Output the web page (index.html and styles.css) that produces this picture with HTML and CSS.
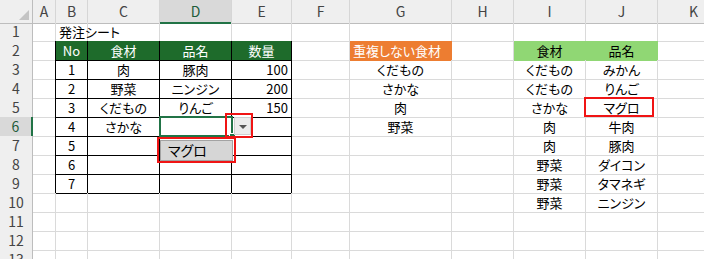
FILE: index.html
```
<!DOCTYPE html>
<html lang="ja">
<head>
<meta charset="utf-8">
<title>発注シート</title>
<link rel="stylesheet" href="styles.css">
</head>
<body>
<section class="sheet">

  <div class="row hdr">
    <div class="corner"><span class="all"></span></div>
    <div class="ch">A</div>
    <div class="ch">B</div>
    <div class="ch">C</div>
    <div class="ch on">D</div>
    <div class="ch">E</div>
    <div class="ch">F</div>
    <div class="ch">G</div>
    <div class="ch">H</div>
    <div class="ch">I</div>
    <div class="ch">J</div>
    <div class="ch">K</div>
  </div>

  <div class="row">
    <div class="rh">1</div>
    <div class="c"></div>
    <div class="c tb left">発注シート</div>
    <div class="c tb"></div>
    <div class="c tb"></div>
    <div class="c tb"></div>
    <div class="c"></div>
    <div class="c"></div>
    <div class="c"></div>
    <div class="c"></div>
    <div class="c"></div>
    <div class="c"></div>
  </div>

  <div class="row">
    <div class="rh">2</div>
    <div class="c tl"></div>
    <div class="c t th">No</div>
    <div class="c t th">食材</div>
    <div class="c t th">品名</div>
    <div class="c t th">数量</div>
    <div class="c"></div>
    <div class="c orange left">重複しない食材</div>
    <div class="c"></div>
    <div class="c lime">食材</div>
    <div class="c lime">品名</div>
    <div class="c"></div>
  </div>

  <div class="row">
    <div class="rh">3</div>
    <div class="c tl"></div>
    <div class="c t">1</div>
    <div class="c t">肉</div>
    <div class="c t">豚肉</div>
    <div class="c t num">100</div>
    <div class="c"></div>
    <div class="c">くだもの</div>
    <div class="c"></div>
    <div class="c">くだもの</div>
    <div class="c">みかん</div>
    <div class="c"></div>
  </div>

  <div class="row">
    <div class="rh">4</div>
    <div class="c tl"></div>
    <div class="c t">2</div>
    <div class="c t">野菜</div>
    <div class="c t">ニンジン</div>
    <div class="c t num">200</div>
    <div class="c"></div>
    <div class="c">さかな</div>
    <div class="c"></div>
    <div class="c">くだもの</div>
    <div class="c">りんご</div>
    <div class="c"></div>
  </div>

  <div class="row">
    <div class="rh">5</div>
    <div class="c tl"></div>
    <div class="c t">3</div>
    <div class="c t">くだもの</div>
    <div class="c t">りんご</div>
    <div class="c t num">150</div>
    <div class="c"></div>
    <div class="c">肉</div>
    <div class="c"></div>
    <div class="c">さかな</div>
    <div class="c">マグロ</div>
    <div class="c"></div>
  </div>

  <div class="row">
    <div class="rh on">6</div>
    <div class="c tl"></div>
    <div class="c t">4</div>
    <div class="c t">さかな</div>
    <div class="c t"></div>
    <div class="c t"></div>
    <div class="c"></div>
    <div class="c">野菜</div>
    <div class="c"></div>
    <div class="c">肉</div>
    <div class="c">牛肉</div>
    <div class="c"></div>
  </div>

  <div class="row">
    <div class="rh">7</div>
    <div class="c tl"></div>
    <div class="c t">5</div>
    <div class="c t"></div>
    <div class="c t"></div>
    <div class="c t"></div>
    <div class="c"></div>
    <div class="c"></div>
    <div class="c"></div>
    <div class="c">肉</div>
    <div class="c">豚肉</div>
    <div class="c"></div>
  </div>

  <div class="row">
    <div class="rh">8</div>
    <div class="c tl"></div>
    <div class="c t">6</div>
    <div class="c t"></div>
    <div class="c t"></div>
    <div class="c t"></div>
    <div class="c"></div>
    <div class="c"></div>
    <div class="c"></div>
    <div class="c">野菜</div>
    <div class="c">ダイコン</div>
    <div class="c"></div>
  </div>

  <div class="row">
    <div class="rh">9</div>
    <div class="c tl"></div>
    <div class="c t">7</div>
    <div class="c t"></div>
    <div class="c t"></div>
    <div class="c t"></div>
    <div class="c"></div>
    <div class="c"></div>
    <div class="c"></div>
    <div class="c">野菜</div>
    <div class="c">タマネギ</div>
    <div class="c"></div>
  </div>

  <div class="row">
    <div class="rh">10</div>
    <div class="c"></div>
    <div class="c"></div>
    <div class="c"></div>
    <div class="c"></div>
    <div class="c"></div>
    <div class="c"></div>
    <div class="c"></div>
    <div class="c"></div>
    <div class="c">野菜</div>
    <div class="c">ニンジン</div>
    <div class="c"></div>
  </div>

  <div class="row">
    <div class="rh">11</div>
    <div class="c"></div><div class="c"></div><div class="c"></div><div class="c"></div>
    <div class="c"></div><div class="c"></div><div class="c"></div><div class="c"></div>
    <div class="c"></div><div class="c"></div><div class="c"></div>
  </div>

  <div class="row">
    <div class="rh">12</div>
    <div class="c"></div><div class="c"></div><div class="c"></div><div class="c"></div>
    <div class="c"></div><div class="c"></div><div class="c"></div><div class="c"></div>
    <div class="c"></div><div class="c"></div><div class="c"></div>
  </div>

  <div class="row">
    <div class="rh">13</div>
    <div class="c"></div><div class="c"></div><div class="c"></div><div class="c"></div>
    <div class="c"></div><div class="c"></div><div class="c"></div><div class="c"></div>
    <div class="c"></div><div class="c"></div><div class="c"></div>
  </div>

  <!-- active cell D6 with its list -->
  <div class="active"><span class="handle"></span></div>
  <div class="dd-btn"></div>
  <div class="dd-list">マグロ</div>

  <!-- red marks -->
  <div class="mark mark-btn"></div>
  <div class="mark mark-list"></div>
  <div class="mark mark-src"></div>

</section>
</body>
</html>
```

FILE: styles.css
```
body {
   margin: 0;
   background: #fff;
   overflow: hidden;
   font-family: "Noto Sans CJK JP", "Noto Sans", sans-serif;
   color: #000;
}

.sheet {
   position: relative;
   width: 730px;
}

.row {
   display: grid;
   grid-template-columns: 33px 23px 32px 72px 72px 60px 58px 102px 62px 72px 72px 72px;
   height: 19px;
}

.row > div {
   box-sizing: border-box;
   white-space: nowrap;
}

/* headers */
.row.hdr { height: 22px; }

.corner {
   position: relative;
   background: #efefef;
   border-right: 1px solid #bdbdbd;
   border-bottom: 1px solid #bdbdbd;
}

.corner .all {
   position: absolute;
   right: 3px;
   bottom: 3px;
   width: 0;
   height: 0;
   border-left: 10px solid transparent;
   border-bottom: 10px solid #c4c4c4;
}

.ch {
   background: #efefef;
   border-right: 1px solid #d6d6d6;
   border-bottom: 1px solid #bdbdbd;
   color: #444;
   font-size: 14px;
   line-height: 22px;
   text-align: center;
}

.ch.on {
   background: #d9d9d9;
   border-bottom: 2px solid #217346;
   color: #1e5c3a;
}

.rh {
   background: #efefef;
   border-right: 1px solid #bdbdbd;
   border-bottom: 1px solid #dadada;
   color: #444;
   font-size: 14px;
   line-height: 19px;
   text-align: center;
}

.rh.on {
   background: #d9d9d9;
   border-right: 2px solid #217346;
   color: #1e5c3a;
}

/* cells */
.c, .dd-list {
   font-size: 13px;
   font-feature-settings: "palt" 1;
   font-variant-east-asian: proportional-width;
}

.c {
   border-right: 1px solid #dadada;
   border-bottom: 1px solid #dadada;
   line-height: 19px;
   text-align: center;
}

.left { text-align: left; padding-left: 3px; }
.num { text-align: right; padding-right: 3px; }

.tl { border-right-color: #000; }
.tb { border-bottom-color: #000; }
.t { border-right-color: #000; border-bottom-color: #000; }

.th {
   background: #1e6b2b;
   color: #fff;
}

.orange {
   background: #ed7d31;
   border-color: transparent;
   color: #fff;
}

.lime {
   background: #90d774;
   border-color: transparent;
}

/* overlays */
.active {
   position: absolute;
   left: 159px;
   top: 116px;
   width: 74px;
   height: 21px;
   box-sizing: border-box;
   border: 2px solid #217346;
}

.handle {
   position: absolute;
   right: -5px;
   bottom: -5px;
   width: 7px;
   height: 7px;
   box-sizing: border-box;
   background: #217346;
   border: 1px solid #fff;
}

.dd-btn {
   position: absolute;
   left: 234px;
   top: 117px;
   width: 17px;
   height: 18px;
   box-sizing: border-box;
   background: #ececec;
   border: 1px solid #cfcfcf;
}

.dd-btn:after {
   content: '';
   position: absolute;
   left: 4px;
   top: 7px;
   border-left: 4px solid transparent;
   border-right: 4px solid transparent;
   border-top: 4px solid #555;
}

.dd-list {
   position: absolute;
   left: 160px;
   top: 140px;
   width: 73px;
   height: 21px;
   box-sizing: border-box;
   background: #d6d6d6;
   border: 1px solid #a3a3a3;
   font-size: 14px;
   line-height: 19px;
   padding-left: 7px;
}

.mark {
   position: absolute;
   box-sizing: border-box;
   border: 2px solid #f01414;
}

.mark-btn { left: 225px; top: 113px; width: 28px; height: 25px; }
.mark-list { left: 157px; top: 137px; width: 79px; height: 26px; }
.mark-src { left: 584px; top: 97px; width: 70px; height: 20px; }
```
